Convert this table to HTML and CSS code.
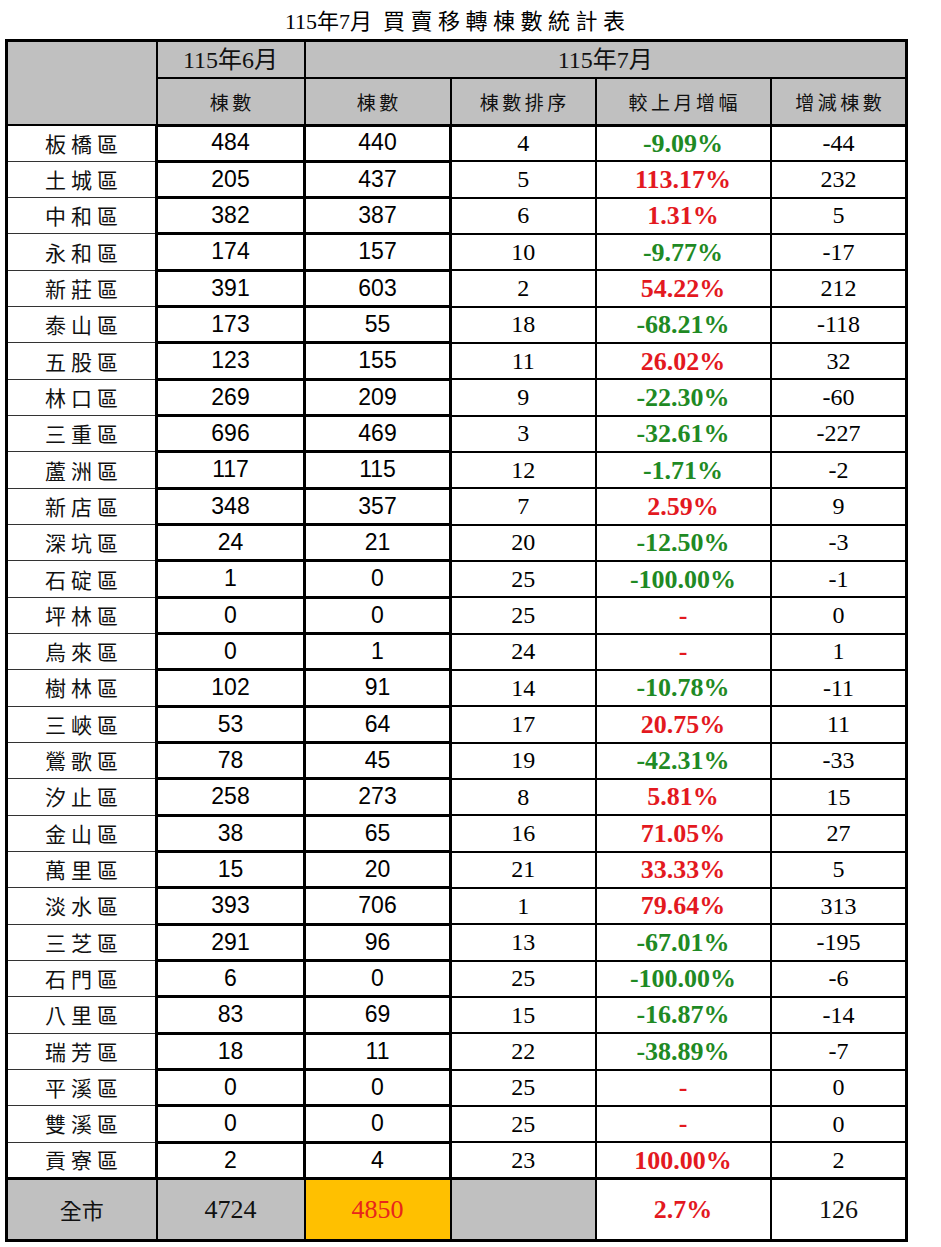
FILE: index.html
```html
<!DOCTYPE html>
<html lang="zh-Hant">
<head>
<meta charset="utf-8">
<title>115年7月 買賣移轉棟數統計表</title>
<link rel="stylesheet" href="styles.css">
</head>
<body>
<div class="page">
  <div class="title"><span class="t-date">115年7月</span><span class="t-name">買賣移轉棟數統計表</span></div>
  <table class="stats">
    <colgroup>
      <col class="c-name"><col class="c-prev"><col class="c-cur"><col class="c-rank"><col class="c-pct"><col class="c-diff">
    </colgroup>
    <thead>
      <tr class="h1"><th rowspan="2"></th><th class="month">115年6月</th><th class="month" colspan="5">115年7月</th></tr>
      <tr class="h2"><th>棟數</th><th>棟數</th><th>棟數排序</th><th>較上月增幅</th><th>增減棟數</th></tr>
    </thead>
    <tbody>
      <tr><td class="name">板橋區</td><td class="box">484</td><td class="box">440</td><td class="num">4</td><td class="pct down">-9.09%</td><td class="num">-44</td></tr>
      <tr><td class="name">土城區</td><td class="box">205</td><td class="box">437</td><td class="num">5</td><td class="pct up">113.17%</td><td class="num">232</td></tr>
      <tr><td class="name">中和區</td><td class="box">382</td><td class="box">387</td><td class="num">6</td><td class="pct up">1.31%</td><td class="num">5</td></tr>
      <tr><td class="name">永和區</td><td class="box">174</td><td class="box">157</td><td class="num">10</td><td class="pct down">-9.77%</td><td class="num">-17</td></tr>
      <tr><td class="name">新莊區</td><td class="box">391</td><td class="box">603</td><td class="num">2</td><td class="pct up">54.22%</td><td class="num">212</td></tr>
      <tr><td class="name">泰山區</td><td class="box">173</td><td class="box">55</td><td class="num">18</td><td class="pct down">-68.21%</td><td class="num">-118</td></tr>
      <tr><td class="name">五股區</td><td class="box">123</td><td class="box">155</td><td class="num">11</td><td class="pct up">26.02%</td><td class="num">32</td></tr>
      <tr><td class="name">林口區</td><td class="box">269</td><td class="box">209</td><td class="num">9</td><td class="pct down">-22.30%</td><td class="num">-60</td></tr>
      <tr><td class="name">三重區</td><td class="box">696</td><td class="box">469</td><td class="num">3</td><td class="pct down">-32.61%</td><td class="num">-227</td></tr>
      <tr><td class="name">蘆洲區</td><td class="box">117</td><td class="box">115</td><td class="num">12</td><td class="pct down">-1.71%</td><td class="num">-2</td></tr>
      <tr><td class="name">新店區</td><td class="box">348</td><td class="box">357</td><td class="num">7</td><td class="pct up">2.59%</td><td class="num">9</td></tr>
      <tr><td class="name">深坑區</td><td class="box">24</td><td class="box">21</td><td class="num">20</td><td class="pct down">-12.50%</td><td class="num">-3</td></tr>
      <tr><td class="name">石碇區</td><td class="box">1</td><td class="box">0</td><td class="num">25</td><td class="pct down">-100.00%</td><td class="num">-1</td></tr>
      <tr><td class="name">坪林區</td><td class="box">0</td><td class="box">0</td><td class="num">25</td><td class="pct up">-</td><td class="num">0</td></tr>
      <tr><td class="name">烏來區</td><td class="box">0</td><td class="box">1</td><td class="num">24</td><td class="pct up">-</td><td class="num">1</td></tr>
      <tr><td class="name">樹林區</td><td class="box">102</td><td class="box">91</td><td class="num">14</td><td class="pct down">-10.78%</td><td class="num">-11</td></tr>
      <tr><td class="name">三峽區</td><td class="box">53</td><td class="box">64</td><td class="num">17</td><td class="pct up">20.75%</td><td class="num">11</td></tr>
      <tr><td class="name">鶯歌區</td><td class="box">78</td><td class="box">45</td><td class="num">19</td><td class="pct down">-42.31%</td><td class="num">-33</td></tr>
      <tr><td class="name">汐止區</td><td class="box">258</td><td class="box">273</td><td class="num">8</td><td class="pct up">5.81%</td><td class="num">15</td></tr>
      <tr><td class="name">金山區</td><td class="box">38</td><td class="box">65</td><td class="num">16</td><td class="pct up">71.05%</td><td class="num">27</td></tr>
      <tr><td class="name">萬里區</td><td class="box">15</td><td class="box">20</td><td class="num">21</td><td class="pct up">33.33%</td><td class="num">5</td></tr>
      <tr><td class="name">淡水區</td><td class="box">393</td><td class="box">706</td><td class="num">1</td><td class="pct up">79.64%</td><td class="num">313</td></tr>
      <tr><td class="name">三芝區</td><td class="box">291</td><td class="box">96</td><td class="num">13</td><td class="pct down">-67.01%</td><td class="num">-195</td></tr>
      <tr><td class="name">石門區</td><td class="box">6</td><td class="box">0</td><td class="num">25</td><td class="pct down">-100.00%</td><td class="num">-6</td></tr>
      <tr><td class="name">八里區</td><td class="box">83</td><td class="box">69</td><td class="num">15</td><td class="pct down">-16.87%</td><td class="num">-14</td></tr>
      <tr><td class="name">瑞芳區</td><td class="box">18</td><td class="box">11</td><td class="num">22</td><td class="pct down">-38.89%</td><td class="num">-7</td></tr>
      <tr><td class="name">平溪區</td><td class="box">0</td><td class="box">0</td><td class="num">25</td><td class="pct up">-</td><td class="num">0</td></tr>
      <tr><td class="name">雙溪區</td><td class="box">0</td><td class="box">0</td><td class="num">25</td><td class="pct up">-</td><td class="num">0</td></tr>
      <tr><td class="name">貢寮區</td><td class="box">2</td><td class="box">4</td><td class="num">23</td><td class="pct up">100.00%</td><td class="num">2</td></tr>
    </tbody>
    <tfoot>
      <tr><td class="t-name-cell">全市</td><td class="t-gray t-num">4724</td><td class="t-hl">4850</td><td class="t-gray"></td><td class="pct up t-pct">2.7%</td><td class="t-num">126</td></tr>
    </tfoot>
  </table>
</div>
</body>
</html>
```

FILE: styles.css
```css
html, body {
  margin: 0;
  padding: 0;
  background: #fff;
}

.page {
  padding-left: 5px;
  width: 900px;
  color: #000;
  font-family: "Liberation Serif", "Noto Sans CJK TC", serif;
}

.title {
  height: 39px;
  display: flex;
  justify-content: center;
  align-items: center;
  padding-top: 4px;
  box-sizing: border-box;
  font-size: 22px;
  line-height: 1;
}

.t-date {
  margin-right: 11px;
}

.t-name {
  letter-spacing: 5.5px;
  margin-right: -5.5px;
}

.stats {
  border-collapse: collapse;
  table-layout: fixed;
  width: 900px;
  border: 3px solid #000;
}

.c-name { width: 150px; }
.c-prev { width: 148px; }
.c-cur  { width: 146px; }
.c-rank { width: 145px; }
.c-pct  { width: 175px; }
.c-diff { width: 136px; }

th, td {
  padding: 0;
  text-align: center;
  vertical-align: middle;
  line-height: 1.2;
}

th {
  background: #c0c0c0;
  border: 2px solid #000;
  font-weight: normal;
  color: #111;
}

.h1 { height: 37.5px; }
.h2 { height: 47px; }

.h1 .month {
  font-size: 24px;
  padding-top: 2px;
}

.h2 th {
  font-family: "Noto Sans CJK TC", sans-serif;
  font-size: 19px;
  letter-spacing: 3.5px;
  padding-left: 3.5px;
  border-bottom: 3px solid #000;
  padding-top: 3px;
}

tbody tr { height: 36.34px; }

tbody td {
  border: 2px solid #000;
}

td.name {
  font-family: "Noto Sans CJK TC", sans-serif;
  font-size: 21px;
  letter-spacing: 5px;
  padding-left: 5px;
  border-top: 1.5px solid #333;
  border-bottom: 1.5px solid #333;
  color: #111;
}

td.box {
  border: 3px solid #000;
  font-family: "Liberation Sans", sans-serif;
  font-size: 23px;
}

td.num {
  font-size: 24px;
}

td.pct {
  font-weight: bold;
  font-size: 26px;
}

.pct.down { color: #1f8a24; }
.pct.up { color: #e3191f; }

tfoot tr { height: 62px; }

tfoot td {
  border: 2px solid #000;
  border-top: 3.5px solid #000;
  background: #fff;
}

.t-name-cell {
  background: #c0c0c0 !important;
  font-family: "Noto Sans CJK TC", sans-serif;
  font-size: 22px;
  color: #111;
}

.t-gray {
  background: #c0c0c0 !important;
}

.t-num {
  font-size: 26px;
  color: #111;
}

.t-hl {
  background: #ffc000 !important;
  color: #e8251c;
  font-size: 26px;
}

.t-pct {
  font-size: 26px;
}
```
